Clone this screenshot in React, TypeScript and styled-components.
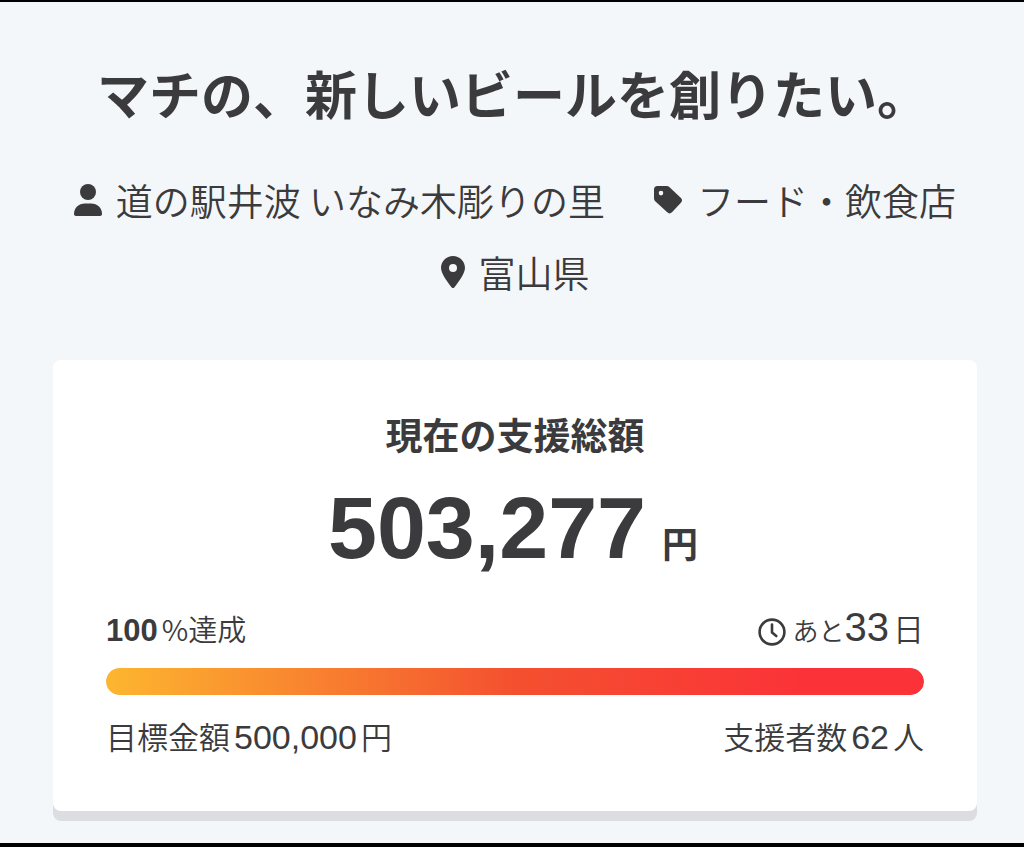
import React from "react";
import styled, { createGlobalStyle } from "styled-components";

const GlobalStyle = createGlobalStyle`
  *, *::before, *::after {
    box-sizing: border-box;
  }

  body {
    margin: 0;
    background: #f4f7f9;
    color: #3b3b3d;
    font-family: "Liberation Sans", "Noto Sans CJK JP", sans-serif;
  }
`;

const Page = styled.main`
  display: flex;
  flex-direction: column;
  min-height: 100vh;
  padding: 61px 47px 22px 53px;
  border-top: 2px solid #000;
  border-bottom: 4px solid #000;
  background: #f4f7f9;
`;

const Title = styled.h1`
  margin: 0;
  padding-right: 4px;
  font-size: 52px;
  line-height: 68px;
  font-weight: 700;
  text-align: center;
`;

const MetaList = styled.ul`
  display: flex;
  flex-wrap: wrap;
  justify-content: center;
  column-gap: 48px;
  margin: 33px 0 0;
  padding: 0;
  list-style: none;
`;

const MetaItem = styled.li`
  display: flex;
  align-items: center;
  gap: 14px;
  font-family: "Noto Sans CJK JP DemiLight", "Noto Sans CJK JP", sans-serif;
  font-size: 37px;
  line-height: 72px;
  font-weight: 350;
  white-space: nowrap;
`;

const Icon = styled.svg<{ $width: number; $height: number }>`
  flex: none;
  width: ${(p) => p.$width}px;
  height: ${(p) => p.$height}px;
`;

const Card = styled.section`
  margin-top: 52px;
  padding: 54px 53px 50px;
  border-radius: 8px;
  background: #fff;
  box-shadow: 0 10px 0 #dcdde0;
`;

const CardHeading = styled.h2`
  margin: 0;
  font-size: 37px;
  line-height: 48px;
  font-weight: 700;
  text-align: center;
`;

const Amount = styled.p`
  display: flex;
  align-items: baseline;
  justify-content: center;
  gap: 16px;
  margin: 16px 0 25px;
  padding-right: 4px;
  font-size: 88px;
  line-height: 100px;
  font-weight: 700;
`;

const AmountUnit = styled.span`
  font-size: 36px;
  line-height: 48px;
`;

const StatRow = styled.div`
  display: flex;
  align-items: baseline;
  justify-content: space-between;
  line-height: 48px;
`;

const Stat = styled.p`
  display: flex;
  align-items: baseline;
  gap: 4px;
  margin: 0;
  white-space: nowrap;
`;

const Label = styled.span<{ $size: number }>`
  font-family: "Noto Sans CJK JP DemiLight", "Noto Sans CJK JP", sans-serif;
  font-size: ${(p) => p.$size}px;
  font-weight: 350;
`;

const Value = styled.span<{ $size: number; $bold?: boolean }>`
  font-size: ${(p) => p.$size}px;
  font-weight: ${(p) => (p.$bold ? 700 : 400)};
`;

const ClockIcon = styled(Icon)`
  align-self: center;
  margin-right: 2px;
`;

const Track = styled.div`
  height: 27px;
  margin: 8px 0 17px;
  overflow: hidden;
  border-radius: 14px;
  background: #e6e7ea;
`;

const Fill = styled.div`
  height: 100%;
  border-radius: 14px;
  background: linear-gradient(90deg, #fdb62f 0%, #f4502f 50%, #fb3338 85%);
`;

const progress = 100;

export default function App() {
  return (
    <>
      <GlobalStyle />
      <Page>
        <Title>マチの、新しいビールを創りたい。</Title>
        <MetaList>
          <MetaItem>
            <Icon $width={28} $height={32} viewBox="0 0 28 32" fill="currentColor" aria-hidden="true">
              <circle cx="14" cy="8" r="8" />
              <path d="M0 30C0 23.800 4.500 19.500 11 19.500h6c6.500 0 11 4.300 11 10.500 0 1.200-.8 2-2 2H2c-1.200 0-2-.8-2-2z" />
            </Icon>
            道の駅井波 いなみ木彫りの里
          </MetaItem>
          <MetaItem>
            <Icon $width={30} $height={30} viewBox="0 0 30 30" fill="currentColor" aria-hidden="true">
              <path
                fillRule="evenodd"
                d="M1 4.500A3.500 3.500 0 0 1 4.500 1h9.200c1 0 1.900.4 2.600 1.100l11.400 10.600a3.600 3.600 0 0 1 0 5.200l-8.500 9.200a3.600 3.600 0 0 1-5.200 0L2.200 16.300A4 4 0 0 1 1 13.600zM8 5.800a2.300 2.300 0 1 0 0 4.600 2.300 2.300 0 0 0 0-4.600z"
              />
            </Icon>
            フード・飲食店
          </MetaItem>
          <MetaItem>
            <Icon $width={24} $height={32} viewBox="0 0 24 32" fill="currentColor" aria-hidden="true">
              <path
                fillRule="evenodd"
                d="M12 0C5.400 0 0 5.400 0 12c0 5.500 7.300 15.200 10.500 19.300.8 1 2.200 1 3 0C16.700 27.200 24 17.500 24 12 24 5.400 18.600 0 12 0zm0 8a4 4 0 1 1 0 8 4 4 0 0 1 0-8z"
              />
            </Icon>
            富山県
          </MetaItem>
        </MetaList>

        <Card>
          <CardHeading>現在の支援総額</CardHeading>
          <Amount>
            503,277<AmountUnit>円</AmountUnit>
          </Amount>
          <StatRow>
            <Stat>
              <Value $size={31} $bold>100</Value>
              <Label $size={29}>%達成</Label>
            </Stat>
            <Stat>
              <ClockIcon $width={28} $height={28} viewBox="0 0 28 28" fill="none" stroke="currentColor" aria-hidden="true">
                <circle cx="14" cy="14" r="12.400" strokeWidth="2.600" />
                <path d="M14 6.500v8l4.300 3.500" strokeWidth="2.600" strokeLinecap="round" strokeLinejoin="round" />
              </ClockIcon>
              <span>
                <Label $size={26}>あと</Label>
                <Value $size={40}>33</Value>
              </span>
              <Label $size={31}>日</Label>
            </Stat>
          </StatRow>
          <Track role="progressbar" aria-label="達成率" aria-valuenow={progress} aria-valuemin={0} aria-valuemax={100}>
            <Fill style={{ width: `${progress}%` }} />
          </Track>
          <StatRow>
            <Stat>
              <Label $size={31}>目標金額</Label>
              <Value $size={34}>500,000</Value>
              <Label $size={31}>円</Label>
            </Stat>
            <Stat>
              <Label $size={31}>支援者数</Label>
              <Value $size={34}>62</Value>
              <Label $size={31}>人</Label>
            </Stat>
          </StatRow>
        </Card>
      </Page>
    </>
  );
}
